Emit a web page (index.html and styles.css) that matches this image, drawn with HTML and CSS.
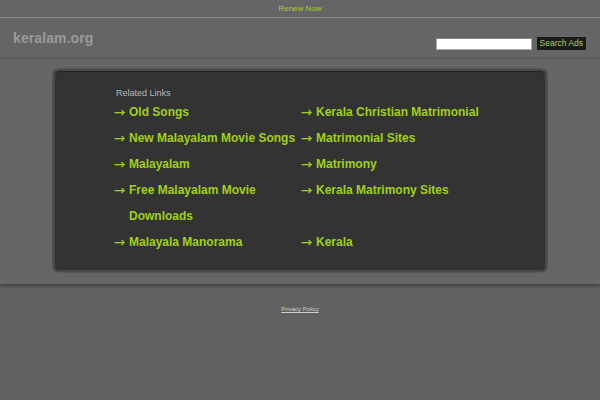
FILE: index.html
```html
<!DOCTYPE html>
<html>
<head>
<meta charset="utf-8">
<link rel="stylesheet" href="styles.css">
</head>
<body>
<div class="topbar"><a href="#" class="renew">Renew Now</a></div>
<div class="header">
  <div class="logo">keralam.org</div>
  <form class="search">
    <input type="text" class="search-input">
    <button type="button" class="search-btn">Search Ads</button>
  </form>
</div>
<div class="main">
  <div class="box">
    <div class="related">Related Links</div>
    <ul class="links">
      <li><span class="arr">→</span><a href="#">Old Songs</a></li>
      <li><span class="arr">→</span><a href="#">Kerala Christian Matrimonial</a></li>
      <li><span class="arr">→</span><a href="#">New Malayalam Movie Songs</a></li>
      <li><span class="arr">→</span><a href="#">Matrimonial Sites</a></li>
      <li><span class="arr">→</span><a href="#">Malayalam</a></li>
      <li><span class="arr">→</span><a href="#">Matrimony</a></li>
      <li><span class="arr">→</span><a href="#">Free Malayalam Movie Downloads</a></li>
      <li><span class="arr">→</span><a href="#">Kerala Matrimony Sites</a></li>
      <li><span class="arr">→</span><a href="#">Malayala Manorama</a></li>
      <li><span class="arr">→</span><a href="#">Kerala</a></li>
    </ul>
  </div>
</div>
<div class="footer"><a href="#" class="privacy">Privacy Policy</a></div>
</body>
</html>
```
FILE: styles.css
```css
html, body {
  margin: 0;
  padding: 0;
  background: #616161;
  font-family: "Liberation Sans", Arial, sans-serif;
}
.topbar {
  height: 17px;
  background: #656565;
  border-bottom: 1px solid #8e8e8e;
  display: flex;
  align-items: center;
  justify-content: center;
}
.renew {
  color: #a5cc3a;
  font-size: 8px;
  text-decoration: none;
  line-height: 17px;
}
.header {
  height: 40px;
  background: #656565;
  border-bottom: 1px solid #595959;
  display: flex;
  align-items: flex-start;
  justify-content: space-between;
  padding: 0 14px 0 13px;
}
.logo {
  color: #9a9a9a;
  font-size: 14px;
  font-weight: bold;
  margin-top: 12px;
  letter-spacing: 0.1px;
}
.search {
  display: flex;
  align-items: center;
  gap: 5px;
  margin-top: 19px;
}
.search-input {
  width: 94px;
  height: 10px;
  padding: 0;
  margin: 0;
  border: 1px solid #aaa;
  border-top-color: #888;
  background: #fff;
}
.search-btn {
  height: 13px;
  padding: 0 3px;
  margin: 0;
  border: 0;
  background: #1a1c17;
  color: #a9cc6a;
  font-family: "Liberation Sans", Arial, sans-serif;
  font-size: 8.5px;
  line-height: 13px;
}
.main {
  background: #666;
  padding: 10px 53px 12px 53px;
  box-shadow: 0 2px 3px rgba(0,0,0,0.35);
  position: relative;
}
.box {
  background: #333;
  border: 2px solid #4a4a4a;
  border-radius: 6px;
  box-shadow: 0 0 2px rgba(0,0,0,0.5), inset 0 1px 1px rgba(0,0,0,0.4);
  padding: 17px 40px 6px 60px;
  height: 176px;
}
.related {
  color: #b8b8b8;
  font-size: 9px;
  line-height: 10px;
  margin-left: 1px;
}
.links {
  list-style: none;
  margin: 2px 0 0 0;
  padding: 0;
  display: grid;
  grid-template-columns: 187px 1fr;
}
.links li {
  display: flex;
  align-items: flex-start;
  font-size: 12px;
  font-weight: bold;
  line-height: 25.9px;
  color: #a0d018;
}
.arr {
  width: 14px;
  flex: none;
  font-family: "Noto Sans CJK JP", sans-serif;
  font-weight: bold;
  font-size: 11.5px;
  margin-left: -1px;
  margin-right: 1px;
}
.links a {
  color: #a0d018;
  text-decoration: none;
}
.footer {
  text-align: center;
  padding-top: 21px;
  font-size: 6px;
  line-height: 8px;
}
.privacy {
  color: #d0d0d0;
  font-size: 6px;
}
```
